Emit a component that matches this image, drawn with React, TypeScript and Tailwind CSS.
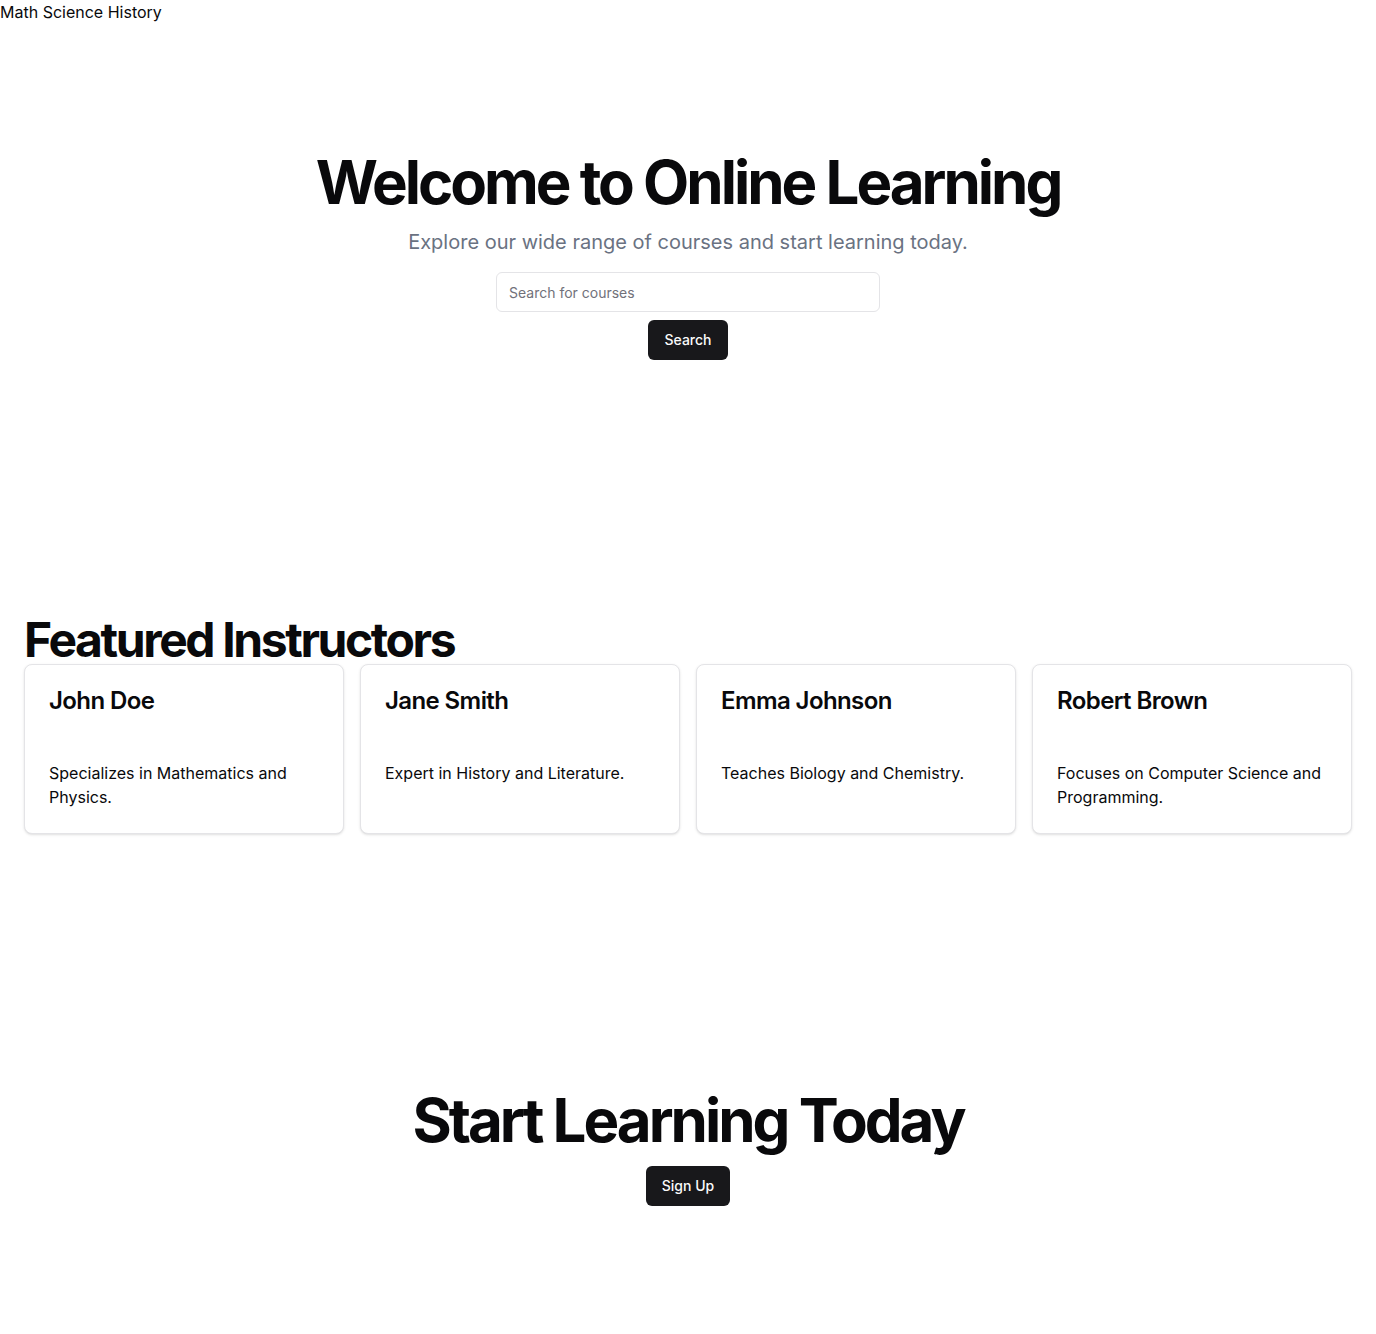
import React from "react";

const instructors = [
  { name: "John Doe", desc: "Specializes in Mathematics and Physics." },
  { name: "Jane Smith", desc: "Expert in History and Literature." },
  { name: "Emma Johnson", desc: "Teaches Biology and Chemistry." },
  { name: "Robert Brown", desc: "Focuses on Computer Science and Programming." },
];

export default function App() {
  return (
    <div className="min-h-screen bg-white text-[#09090b] font-['Inter',sans-serif]">
      <nav className="text-base leading-6">Math Science History</nav>

      <section className="py-32">
        <div className="flex flex-col items-center gap-4 px-6 text-center">
          <h1 className="text-6xl leading-none font-bold tracking-tighter">
            Welcome to Online Learning
          </h1>
          <p className="max-w-[700px] text-xl leading-7 text-gray-500">
            Explore our wide range of courses and start learning today.
          </p>
          <form className="flex w-full max-w-sm flex-col items-center gap-2">
            <input
              type="text"
              placeholder="Search for courses"
              className="h-10 w-full rounded-md border border-[#e4e4e7] bg-white px-3 py-2 text-sm placeholder:text-[#71717a] outline-none"
            />
            <button
              type="button"
              className="h-10 rounded-md bg-[#18181b] px-4 text-sm font-medium text-[#fafafa]"
            >
              Search
            </button>
          </form>
        </div>
      </section>

      <section className="py-32 px-6">
        <h2 className="text-5xl leading-none font-bold tracking-tighter">
          Featured Instructors
        </h2>
        <div className="grid grid-cols-4 gap-4">
          {instructors.map((i) => (
            <div
              key={i.name}
              className="rounded-lg border border-[#e4e4e7] bg-white shadow-sm"
            >
              <div className="p-6">
                <h3 className="text-2xl leading-none font-semibold tracking-tight">
                  {i.name}
                </h3>
              </div>
              <div className="p-6">
                <p className="text-base leading-6">{i.desc}</p>
              </div>
            </div>
          ))}
        </div>
      </section>

      <section className="py-32">
        <div className="flex flex-col items-center gap-4 text-center">
          <h2 className="text-6xl leading-none font-bold tracking-tighter">
            Start Learning Today
          </h2>
          <button
            type="button"
            className="h-10 rounded-md bg-[#18181b] px-4 text-sm font-medium text-[#fafafa]"
          >
            Sign Up
          </button>
        </div>
      </section>
    </div>
  );
}
